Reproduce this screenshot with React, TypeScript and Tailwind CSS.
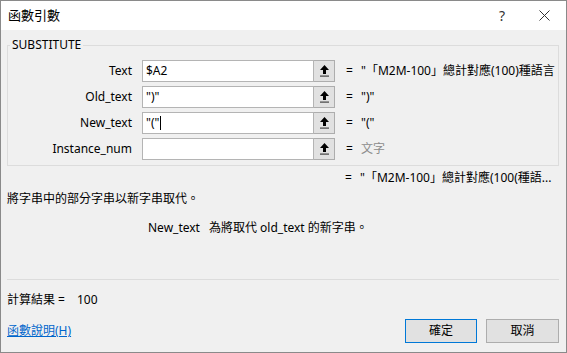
import React from "react";

const font = { fontFamily: '"Noto Sans", "Noto Sans CJK TC", sans-serif' };

const rows = [
  { label: "Text", value: "$A2", result: "\"「M2M-100」總計對應(100)種語言", muted: false, caret: false },
  { label: "Old_text", value: "\")\"", result: "\")\"", muted: false, caret: false },
  { label: "New_text", value: "\"(\"", result: "\"(\"", muted: false, caret: true },
  { label: "Instance_num", value: "", result: "文字", muted: true, caret: false },
];

const CollapseIcon = () => (
  <svg width="11" height="14" viewBox="0 0 11 14">
    <path d="M5.5 1 L10 6 H7 V10 H4 V6 H1 Z" fill="#000" />
    <rect x="1" y="11.5" width="9" height="1.2" fill="#444" />
  </svg>
);

export default function App() {
  return (
    <div
      className="w-[567px] h-[353px] border border-[#8a8a8a] bg-[#f0f0f0] flex flex-col text-[12px] text-black overflow-hidden"
      style={font}
    >
      {/* title bar */}
      <div className="h-[29px] bg-white flex items-center pl-[7px] pr-[16px] shrink-0">
        <span className="text-[13px]">函數引數</span>
        <span className="ml-auto text-[14px] text-[#333] mr-[34px]">?</span>
        <svg width="11" height="11" viewBox="0 0 11 11">
          <path d="M0.5 0.5 L10.5 10.5 M10.5 0.5 L0.5 10.5" stroke="#333" strokeWidth="1" />
        </svg>
      </div>

      <div className="px-[6px] flex flex-col flex-1">
        <fieldset className="mt-[7px] border border-[#dcdcdc] pt-[7px] pb-[5px] mr-px">
          <legend className="ml-[2px] px-[2px] text-[12px] leading-[16px]">SUBSTITUTE</legend>
          <div className="flex flex-col gap-[4px]">
            {rows.map((r) => (
              <div key={r.label} className="flex items-center h-[22px]">
                <div className="w-[125px] text-right pr-[1px]">{r.label}</div>
                <div className="ml-[9px] w-[172px] h-[22px] bg-white border border-[#b4b4b4] flex items-center pl-[3px]">
                  <span>{r.value}</span>
                  {r.caret && <span className="w-px h-[14px] bg-black ml-px" />}
                </div>
                <div className="w-[21px] h-[22px] bg-[#e1e1e1] border border-[#adadad] border-l-0 flex items-center justify-center">
                  <CollapseIcon />
                </div>
                <span className="ml-[11px] w-[15px]">=</span>
                <span className={r.muted ? "text-[#8c8c8c]" : ""}>{r.result}</span>
              </div>
            ))}
          </div>
        </fieldset>

        <div className="mt-[3px] flex h-[18px] items-center">
          <span className="ml-[338px] w-[15px]">=</span>
          <span>"「M2M-100」總計對應(100(種語...</span>
        </div>
        <div className="mt-[3px] h-[18px] flex items-center">將字串中的部分字串以新字串取代。</div>
        <div className="mt-[11px] h-[18px] flex items-center pl-[141px]">
          <span>New_text</span>
          <span className="ml-[9px]">為將取代 old_text 的新字串。</span>
        </div>

        <div className="mt-[42px] h-px bg-[#dcdcdc] mr-[1px]" />

        <div className="mt-[11px] h-[18px] flex items-center">
          <span>計算結果 =</span>
          <span className="ml-[12px]">100</span>
        </div>

        <div className="mt-[10px] flex items-center">
          <a className="text-[#0066cc] underline">函數說明(H)</a>
          <button className="ml-auto w-[72px] h-[24px] bg-[#e1e1e1] border border-[#0078d7]">確定</button>
          <button className="ml-[9px] w-[73px] h-[24px] bg-[#e1e1e1] border border-[#adadad] mr-[1px]">取消</button>
        </div>
      </div>
    </div>
  );
}
